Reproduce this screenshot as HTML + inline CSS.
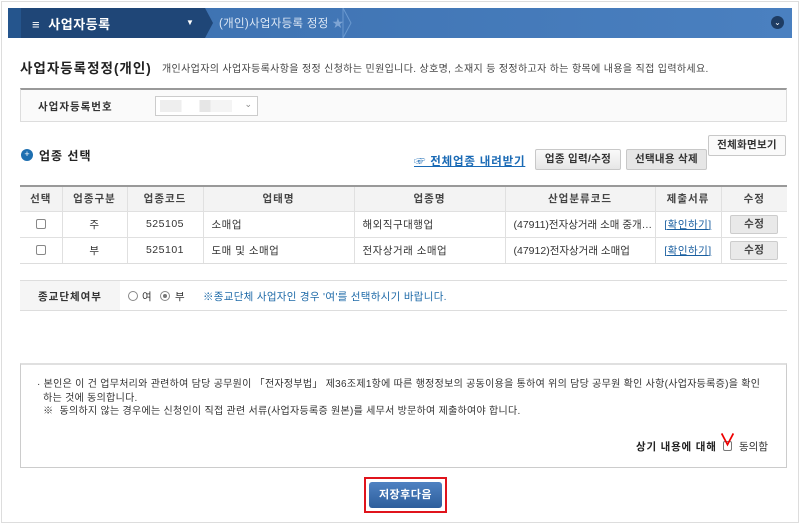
<!DOCTYPE html>
<html><head><meta charset="utf-8"><style>
*{margin:0;padding:0;box-sizing:border-box}
body{width:800px;height:524px;background:#fff;font-family:"Liberation Sans","Noto Sans CJK KR","NanumGothic",sans-serif;font-size:11px;color:#333;position:relative;overflow:hidden}
.a{position:absolute;white-space:nowrap}
.frame{left:1px;top:1px;width:798px;height:522px;border:1px solid #ddd}
.btn{position:absolute;border:1px solid #c8c8c8;background:linear-gradient(#fafafa,#e6e6e6);font-size:10.5px;font-weight:bold;color:#333;text-align:center;border-radius:2px;letter-spacing:0.3px}
table{position:absolute;left:20px;top:185px;width:767px;border-collapse:collapse;border-top:2px solid #999;table-layout:fixed}
td,th{border:1px solid #e0e0e0;border-top:none;height:26px;font-size:10.5px;text-align:center;letter-spacing:0.5px;white-space:nowrap;overflow:hidden}
th{background:#f3f3f3;font-weight:bold;color:#444;height:25px;letter-spacing:1px}
td:first-child,th:first-child{border-left:none}td:last-child,th:last-child{border-right:none}
tr:last-child td{border-bottom:1px solid #ddd}
.l{text-align:left;padding-left:8px}
.cb{display:inline-block;width:10px;height:10px;border:1px solid #888;border-radius:2px;vertical-align:middle;background:#fff}
.lk{color:#1a5fa0;text-decoration:underline}
.sb{display:inline-block;width:48px;height:19px;line-height:17px;border:1px solid #ccc;background:#e9e9e9;border-radius:2px;font-weight:bold;color:#444}
</style></head><body>
<div class="a frame"></div>
<div class="a" style="left:8px;top:8px;width:784px;height:30px;background:linear-gradient(90deg,#3b6fae,#4a80c0)"></div>
<div class="a" style="left:8px;top:8px;width:13px;height:30px;background:#25558d"></div>
<div class="a" style="left:21px;top:8px;width:184px;height:30px;background:#1f4677"></div>
<svg class="a" style="left:205px;top:8px" width="150" height="30"><polygon points="0,0 8,15 0,30" fill="#1f4677"/><polygon points="138,0 146,15 138,30" fill="none" stroke="#6a98cf" stroke-width="1"/></svg>
<div class="a" style="left:32px;top:14px;color:#fff;font-size:13px;font-weight:bold;letter-spacing:0.5px">≡&nbsp; 사업자등록</div>
<div class="a" style="left:186px;top:18px;color:#fff;font-size:8px">▼</div>
<div class="a" style="left:219px;top:15px;color:#dce7f5;font-size:11.5px;letter-spacing:0.3px">(개인)사업자등록 정정 <span style="color:#7ea4d4">★</span></div>
<div class="a" style="left:771px;top:16px;width:13px;height:13px;border-radius:50%;background:#1e3c63;color:#fff;font-size:8px;text-align:center;line-height:13px">⌄</div>
<div class="a" style="left:20px;top:57px;font-size:13.5px;font-weight:bold;color:#222;letter-spacing:1px">사업자등록정정(개인)</div>
<div class="a" style="left:162px;top:60px;font-size:10px;color:#444;letter-spacing:0.35px">개인사업자의 사업자등록사항을 정정 신청하는 민원입니다. 상호명, 소재지 등 정정하고자 하는 항목에 내용을 직접 입력하세요.</div>
<div class="a" style="left:20px;top:88px;width:767px;height:34px;border:1px solid #ddd;border-top:2px solid #999;background:#fafafa"></div>
<div class="a" style="left:38px;top:99px;font-weight:bold;font-size:10.5px;color:#333;letter-spacing:1px">사업자등록번호</div>
<div class="a" style="left:155px;top:96px;width:103px;height:20px;border:1px solid #ccc;background:#fff"><div class="a" style="left:4px;top:3px;width:72px;height:12px;background:linear-gradient(90deg,#eee 0 30%,#fff 30% 55%,#e6e6e6 55% 70%,#f4f4f4 70%)"></div><div class="a" style="right:5px;top:2px;font-size:9px;color:#888">⌄</div></div>
<div class="a" style="left:21px;top:149px;width:12px;height:12px;border-radius:50%;background:#1e6fb0;color:#fff;font-size:9px;line-height:11px;text-align:center">+</div>
<div class="a" style="left:39px;top:147px;font-size:12px;font-weight:bold;color:#222;letter-spacing:1px">업종 선택</div>
<div class="a lk" style="left:414px;top:153px;font-size:11.5px;font-weight:bold;color:#1a6ab5;letter-spacing:0.8px">☞ 전체업종 내려받기</div>
<div class="btn" style="left:535px;top:149px;width:86px;height:21px;line-height:19px">업종 입력/수정</div>
<div class="btn" style="left:626px;top:149px;width:81px;height:21px;line-height:19px;background:#e6e6e6">선택내용 삭제</div>
<div class="btn" style="left:708px;top:135px;width:78px;height:21px;line-height:19px;background:#fafafa">전체화면보기</div>
<table>
<colgroup><col style="width:42px"><col style="width:65px"><col style="width:76px"><col style="width:151px"><col style="width:151px"><col style="width:150px"><col style="width:66px"><col></colgroup>
<tr><th>선택</th><th>업종구분</th><th>업종코드</th><th>업태명</th><th>업종명</th><th>산업분류코드</th><th>제출서류</th><th>수정</th></tr>
<tr><td><span class="cb"></span></td><td>주</td><td>525105</td><td class="l">소매업</td><td class="l">해외직구대행업</td><td class="l" style="letter-spacing:0">(47911)전자상거래 소매 중개…</td><td><span class="lk">[확인하기]</span></td><td><span class="sb">수정</span></td></tr>
<tr><td><span class="cb"></span></td><td>부</td><td>525101</td><td class="l">도매 및 소매업</td><td class="l">전자상거래 소매업</td><td class="l" style="letter-spacing:0">(47912)전자상거래 소매업</td><td><span class="lk">[확인하기]</span></td><td><span class="sb">수정</span></td></tr>
</table>
<div class="a" style="left:20px;top:280px;width:767px;height:31px;border-top:1px solid #ddd;border-bottom:1px solid #ddd"></div>
<div class="a" style="left:20px;top:281px;width:100px;height:29px;background:#f5f5f5"></div>
<div class="a" style="left:38px;top:289px;font-weight:bold;font-size:10.5px;letter-spacing:1px">종교단체여부</div>
<div class="a" style="left:128px;top:291px;width:10px;height:10px;border:1px solid #888;border-radius:50%;background:#fff"></div>
<div class="a" style="left:142px;top:289px;font-size:10.5px">여</div>
<div class="a" style="left:160px;top:291px;width:10px;height:10px;border:1px solid #888;border-radius:50%;background:#fff"><div class="a" style="left:2px;top:2px;width:4px;height:4px;border-radius:50%;background:#777"></div></div>
<div class="a" style="left:175px;top:289px;font-size:10.5px">부</div>
<div class="a" style="left:203px;top:289px;font-size:10.5px;color:#1e6aa8;letter-spacing:0.3px">※종교단체 사업자인 경우 '여'를 선택하시기 바랍니다.</div>
<div class="a" style="left:20px;top:363px;width:767px;height:105px;border:1px solid #ccc;border-top:2px solid #e0e0e0"></div>
<div class="a" style="left:37px;top:378px;font-size:10px;line-height:13.5px;color:#333;letter-spacing:0.28px">· 본인은 이 건 업무처리와 관련하여 담당 공무원이 「전자정부법」 제36조제1항에 따른 행정정보의 공동이용을 통하여 위의 담당 공무원 확인 사항(사업자등록증)을 확인<br>&nbsp;&nbsp;하는 것에 동의합니다.<br>&nbsp;&nbsp;※&nbsp; 동의하지 않는 경우에는 신청인이 직접 관련 서류(사업자등록증 원본)를 세무서 방문하여 제출하여야 합니다.</div>
<div class="a" style="left:636px;top:439px;font-weight:bold;font-size:10.5px;color:#222;letter-spacing:0.8px">상기 내용에 대해</div>
<div class="a" style="left:723px;top:441px;width:9px;height:10px;border:1px solid #777;border-radius:2px"></div>
<div class="a" style="left:719px;top:426px;color:#e00;font-size:17px;font-weight:bold">∨</div>
<div class="a" style="left:739px;top:439px;font-size:10.5px">동의함</div>
<div class="a" style="left:364px;top:477px;width:83px;height:36px;border:2px solid #e0141c"></div>
<div class="a" style="left:369px;top:482px;width:73px;height:26px;border-radius:3px;background:linear-gradient(#4f82c2,#2d5e9c);color:#fff;font-weight:bold;font-size:11px;text-align:center;line-height:26px;letter-spacing:0.5px">저장후다음</div>
</body></html>
